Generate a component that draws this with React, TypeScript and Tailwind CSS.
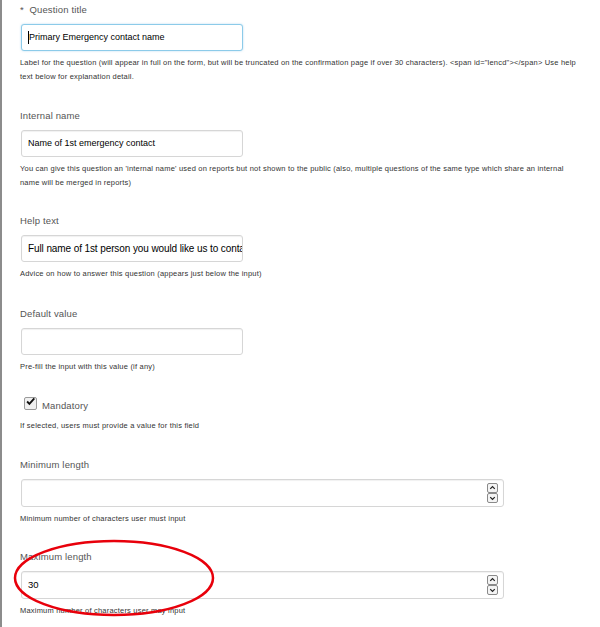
import React from 'react';

const font = { fontFamily: '"Liberation Sans", Arial, sans-serif' };

function Label({ children }: { children: React.ReactNode }) {
  return <div className="text-[9.5px] leading-[12px] text-[#555] tracking-[0.15px]">{children}</div>;
}

function Help({ children }: { children: React.ReactNode }) {
  return <div className="mt-[5px] w-[562px] text-[7.5px] leading-[14px] tracking-[0.2px] text-[#333]">{children}</div>;
}

function TextBox({ value, focused, big }: { value?: string; focused?: boolean; big?: boolean }) {
  return (
    <div
      className={
        'mt-2 ml-px flex h-[27px] w-[222px] items-center overflow-hidden whitespace-nowrap rounded-[3px] border bg-white pl-[6px] text-black ' +
        (big ? 'text-[10px] tracking-[-0.1px] ' : 'text-[9px] ') +
        (focused
          ? 'border-[#8ccbe9] shadow-[0_0_2px_rgba(100,180,230,0.5)]'
          : 'border-[#d6d6d6] shadow-[inset_0_1px_1px_rgba(0,0,0,0.06)]')
      }
    >
      {focused && <span className="inline-block h-[13px] w-px bg-black" />}
      {value}
    </div>
  );
}

function Spinner() {
  return (
    <div className="flex flex-col">
      {['M2.5 6 L5 3.5 L7.5 6', 'M2.5 4 L5 6.5 L7.5 4'].map((d, i) => (
        <div key={i} className="flex h-[10px] w-[11px] items-center justify-center rounded-[2px] border border-[#8a8a8a] bg-[#f4f4f4]">
          <svg width="10" height="10" viewBox="0 0 10 10">
            <path d={d} fill="none" stroke="#222" strokeWidth="1.4" />
          </svg>
        </div>
      ))}
    </div>
  );
}

function NumberBox({ value }: { value?: string }) {
  return (
    <div className="mt-2 ml-px flex h-[28px] w-[483px] items-center justify-between rounded-[3px] border border-[#d6d6d6] bg-white pl-[6px] pr-[5px] text-[9.5px] text-black shadow-[inset_0_1px_1px_rgba(0,0,0,0.06)]">
      <span>{value}</span>
      <Spinner />
    </div>
  );
}

export default function App() {
  return (
    <div className="relative h-[627px] w-[600px] overflow-hidden bg-white" style={font}>
      <div className="h-full border-l-2 border-[#8c8c8c] pl-[18px] pt-[4px]">
        <Label>* &nbsp;Question title</Label>
        <TextBox value="Primary Emergency contact name" focused />
        <Help>
          Label for the question (will appear in full on the form, but will be truncated on the confirmation page if over 30
          characters). &lt;span id="lencd"&gt;&lt;/span&gt; Use help text below for explanation detail.
        </Help>

        <div className="mt-[26px]">
          <Label>Internal name</Label>
          <TextBox value="Name of 1st emergency contact" />
          <Help>
            You can give this question an 'internal name' used on reports but not shown to the public (also, multiple questions
            of the same type which share an internal name will be merged in reports)
          </Help>
        </div>

        <div className="mt-[25px]">
          <Label>Help text</Label>
          <TextBox value="Full name of 1st person you would like us to contact" big />
          <Help>Advice on how to answer this question (appears just below the input)</Help>
        </div>

        <div className="mt-[27px]">
          <Label>Default value</Label>
          <TextBox />
          <Help>Pre-fill the input with this value (if any)</Help>
        </div>

        <div className="mt-[19px] flex items-center">
          <div className="ml-[4px] flex h-[13px] w-[13px] items-center justify-center rounded-[2px] border border-[#9a9a9a] bg-[#f0f0f0]">
            <svg width="13" height="13" viewBox="0 0 13 13" className="-mt-[3px]">
              <path d="M2.5 6.5 L5.2 9.2 L11 2.8" fill="none" stroke="#111" strokeWidth="2.2" />
            </svg>
          </div>
          <span className="ml-[5px] mt-[6px] text-[9.5px] tracking-[0.15px] text-[#555]">Mandatory</span>
        </div>
        <div className="pt-px">
          <Help>If selected, users must provide a value for this field</Help>
        </div>

        <div className="mt-[26px]">
          <Label>Minimum length</Label>
          <NumberBox />
          <Help>Minimum number of characters user must input</Help>
        </div>

        <div className="mt-[25px]">
          <Label>Maximum length</Label>
          <NumberBox value="30" />
          <Help>Maximum number of characters user may input</Help>
        </div>
      </div>

      <svg className="pointer-events-none absolute left-0 top-0" width="600" height="627">
        <ellipse cx="114" cy="578" rx="99" ry="37" fill="none" stroke="#e8000b" strokeWidth="2.5" />
      </svg>
    </div>
  );
}
